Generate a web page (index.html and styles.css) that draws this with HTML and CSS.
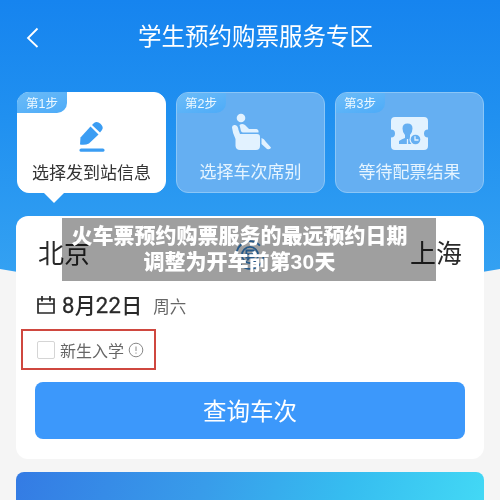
FILE: index.html
```html
<!DOCTYPE html>
<html lang="zh-CN">
<head>
<meta charset="utf-8">
<title>学生预约购票服务专区</title>
<link rel="stylesheet" href="styles.css">
</head>
<body>
<div class="page">
  <svg class="backdrop" viewBox="0 0 500 290" aria-hidden="true">
    <defs><linearGradient id="sky" x1="0" y1="0" x2="0" y2="1"><stop offset="0" stop-color="#1684ef"/><stop offset=".4" stop-color="#2090f0"/><stop offset="1" stop-color="#36a3f2"/></linearGradient></defs>
    <path d="M0 0H500V269Q250 315 0 269Z" fill="url(#sky)"/>
  </svg>
  <header class="header">
    <svg class="back" viewBox="0 0 14 22"><path d="M11.500 1.500 2 11l9.500 9"/></svg>
    <h1 class="title">学生预约购票服务专区</h1>
  </header>
  <section class="steps">
    <div class="step active">
      <span class="tag">第<span class="num">1</span>步</span>
      <svg class="icon" viewBox="0 0 40 40"><g fill="#3b9df3"><path d="M8 30.500 8.500 23.500 18.500 12.500 26.500 20.500 17 29.500Q13 31.500 8 30.500Z"/><path d="M20 11 22 9Q25 6.500 28.500 9.800T30 16L28 18.500Z"/><rect x="7.500" y="34.500" width="25" height="3.300" rx="1.600"/></g></svg>
      <span class="label">选择发到站信息</span>
    </div>
    <div class="step">
      <span class="tag">第<span class="num">2</span>步</span>
      <svg class="icon" viewBox="0 0 40 40"><g fill="#e2f2ff"><circle cx="10" cy="5" r="4.300"/><path d="M1 14.500Q1 11.500 4 12Q7 12.500 7.500 17L9 21H26Q29 21 29 24V33Q29 37 25 37H9Q5 37 4.500 33V26Q1.500 20 1 14.500Z"/><path d="M8.500 12Q11 10 14 12L18 16H25.500Q28 16.500 27.500 19.500H12Q10 19.500 9.500 16Z"/><path d="M30.500 25Q33 25.500 35 29L40 34.500Q39.500 37 36 36L30.500 31Z"/></g></svg>
      <span class="label">选择车次席别</span>
    </div>
    <div class="step">
      <span class="tag">第<span class="num">3</span>步</span>
      <svg class="icon" viewBox="0 0 40 40"><path fill="#e2f2ff" d="M5 4H34Q38 4 38 8V16.500A4 4 0 0 0 38 24.500V33Q38 37 34 37H5Q1 37 1 33V24.500A4 4 0 0 0 1 16.500V8Q1 4 5 4Z"/><g fill="#65aff2"><path d="M12.500 15.500Q12.500 10.500 17.500 10.500T22.500 15.500Q22.500 19.500 20 22V25L25 27V31H9V28Q12 26 15 25V22Q12.500 19.500 12.500 15.500Z"/><circle cx="25.500" cy="26.500" r="6" fill="#e2f2ff"/><circle cx="25.500" cy="26.500" r="4.800"/></g><path fill="none" stroke="#e2f2ff" stroke-width="1.300" d="M25 23.300V27H28.500M17.500 26V31"/></svg>
      <span class="label">等待配票结果</span>
    </div>
  </section>
  <main class="card">
    <div class="route">
      <span>北京</span>
      <svg class="swap" viewBox="0 0 40 40"><g fill="none" stroke="#3b8edb" stroke-width="2"><path d="M5 21A15 15 0 0 1 31 9.500M35 19A15 15 0 0 1 9 30.500"/><circle cx="20" cy="20" r="9"/><path d="M16 15h8v8h-8zM16 19h8M17 26l2-3M23 26l-2-3"/></g></svg>
      <span>上海</span>
    </div>
    <div class="date">
      <svg class="calendar" viewBox="0 0 18 18"><path d="M1 3H17V17H1ZM1 8H17M5 0V5.500M13 0V5.500"/></svg>
      <span class="day"><span class="num">8</span>月<span class="num">22</span>日</span><span class="week">周六</span>
    </div>
    <div class="student">
      <span class="check"></span><span>新生入学</span>
      <svg class="info" viewBox="0 0 16 16"><circle cx="8" cy="8" r="6.800"/><path d="M8 4.500V9M8 10.500V11.700"/></svg>
    </div>
    <div class="query">查询车次</div>
  </main>
  <div class="banner"></div>
  <div class="shade"></div>
  <div class="caption"><div>火车票预约购票服务的最远预约日期</div><div>调整为开车前第<span class="num">30</span>天</div></div>
</div>
</body>
</html>
```
FILE: styles.css
```css
* { box-sizing: border-box; }
body { margin: 0; font-family: "Noto Sans CJK SC", sans-serif; }
.page { position: relative; width: 500px; height: 500px; overflow: hidden; background: #f5f5f5; }
.num { font-family: "Liberation Sans", Arial, sans-serif; }
.backdrop { position: absolute; top: 0; left: 0; width: 500px; height: 290px; }
.header { position: relative; display: flex; align-items: center; height: 92px; padding: 0 26px 17px; }
.back { width: 14px; height: 22px; fill: none; stroke: #fff; stroke-width: 1.8; }
.title { margin: -5px 0 0 98px; color: #fff; font-size: 23.500px; line-height: 32px; font-weight: 400; white-space: nowrap; }
.steps { position: relative; display: flex; gap: 10px; padding: 0 16px 0 17px; height: 124px; }
.step { position: relative; display: flex; flex-direction: column; align-items: center; width: 149px; height: 101px; border-radius: 12px; background: #65aff2; border: 1px solid #8bc6f7; color: #e5f4ff; }
.active { background: #fff; border-color: #fff; color: #333; }
.active::after { content: ""; position: absolute; left: 25px; top: 99px; border: 11px solid transparent; border-top-color: #fff; border-bottom: 0; }
.tag { align-self: flex-start; width: 49px; height: 20px; padding-left: 8px; border-radius: 11px 0 10px; background: linear-gradient(160deg, #6cbcf8, #4dabf8); color: #eef9ff; font-size: 12.500px; line-height: 19px; white-space: nowrap; }
.active .tag { margin: -1px 0 1px -1px; width: 50px; height: 21px; padding: 1px 0 0 9px; border-radius: 12px 0 10px; }
.icon { width: 40px; height: 40px; overflow: visible; }
.label { margin-top: 5px; font-size: 17px; line-height: 26px; white-space: nowrap; }
.active .icon + .label { margin-top: 5px; }
.card { position: relative; width: 468px; height: 243px; margin: 0 0 13px 16px; padding: 15px 19px 0; border-radius: 12px; background: #fff; color: #292929; }
.route { display: flex; justify-content: space-between; align-items: center; height: 45px; padding: 0 3px; font-size: 26px; line-height: 44px; }
.route span { position: relative; top: -2px; }
.swap { width: 36px; height: 36px; margin-top: 3px; }
.date { display: flex; align-items: center; height: 32px; margin-top: 13px; padding-left: 2px; }
.calendar { width: 18px; height: 18px; fill: none; stroke: #292929; stroke-width: 1.700; }
.day { margin-left: 7px; font-size: 21px; line-height: 32px; font-weight: 500; white-space: nowrap; }
.day .num { font-family: Roboto, sans-serif; font-size: 22px; font-weight: 400; letter-spacing: .4px; -webkit-text-stroke: .3px #292929; }
.week { margin: 3px 0 0 11px; color: #666; font-size: 16.500px; line-height: 25px; }
.student { display: flex; align-items: center; width: 135px; height: 41px; margin: 8px 0 12px -14px; padding-left: 14px; border: 2px solid #cf473f; color: #666; font-size: 16px; white-space: nowrap; }
.check { width: 18px; height: 18px; margin-right: 5px; border: 1px solid #d5d5d5; border-radius: 2px; }
.info { width: 16px; height: 16px; margin-left: 4px; fill: none; stroke: #888; stroke-width: 1; }
.query { height: 57px; border-radius: 8px; background: #3c98fb; color: #fff; font-size: 23.500px; line-height: 57px; text-align: center; }
.banner { height: 40px; margin: 0 16px; border-radius: 8px 8px 0 0; background: linear-gradient(110deg, #347be4, #389cea 40%, #36bdf0 70%, #43d9f5); }
.shade, .caption { position: absolute; left: 62px; top: 218px; width: 374px; height: 63px; }
.shade { background: #9f9f9f; mix-blend-mode: multiply; }
.caption { padding: 3px 19px 0 0; color: #fff; font-size: 21px; line-height: 26px; font-weight: 900; text-align: center; white-space: nowrap; }
.caption .num { letter-spacing: .3px; }
```
